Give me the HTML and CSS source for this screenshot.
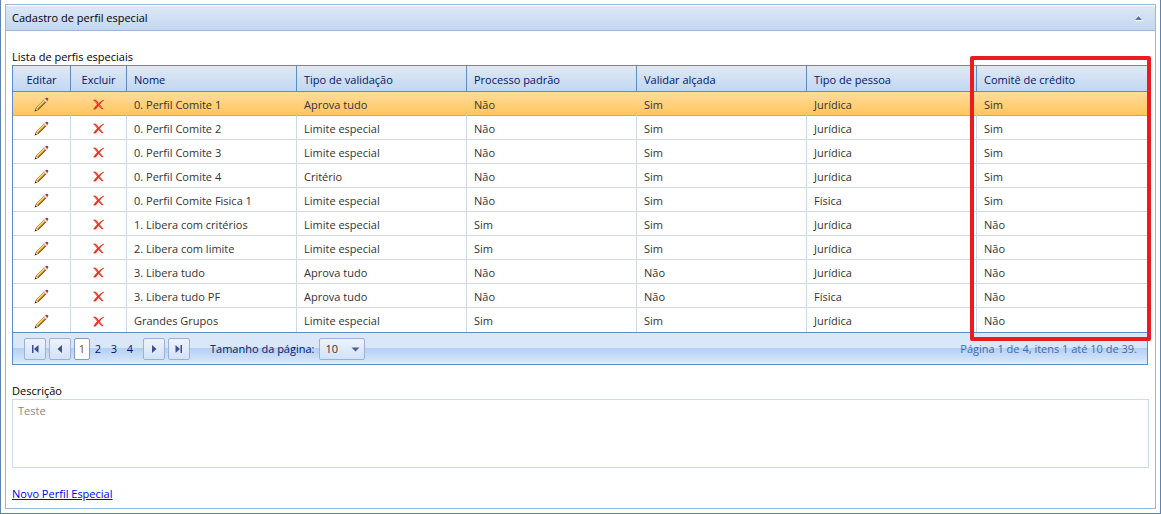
FILE: index.html
```html
<!DOCTYPE html>
<html lang="pt-BR">
<head>
<meta charset="utf-8">
<title>Cadastro de perfil especial</title>
<link rel="stylesheet" href="styles.css">
</head>
<body>
<svg class="sprite" aria-hidden="true">
  <symbol id="pencil" viewBox="0 0 16 16">
    <path d="M.8 15.2 2.200 11.300 10.800 2.700 13.300 5.200 4.700 13.800Z" fill="#7c4d18"/>
    <path d="M2.400 11.400 10.900 2.900 12.500 4.500 4 13Z" fill="#e3a21f"/>
    <path d="M2.700 11.500 11.200 3 11.900 3.700 3.400 12.200Z" fill="#ffe596"/>
    <path d="M.9 15.1 2.300 11.600 4.400 13.700Z" fill="#e8c990"/>
    <path d="M.6 15.4 1.500 13 3 14.500Z" fill="#222"/>
    <path d="M10.300 3.200 11.700 1.800 14.200 4.300 12.800 5.700Z" fill="#eceef4" stroke="#8c8c98" stroke-width=".4"/>
    <path d="M11.900 1.700Q13.300.3 14.900 1.400 15.900 2.800 14.300 4.200Z" fill="#c22c3a"/>
  </symbol>
  <symbol id="cross" viewBox="0 0 14 12">
    <path d="M1 1.2 3.4.6Q6.200 2.500 7.200 4.500 9.500 1.700 13 .5L13.300 1Q10.200 3.100 8.400 5.900L12.500 10.800 10.600 11.300 6.900 7.700Q5.300 9.700 3.900 11.400L1.200 11.100Q3.200 8 5.500 5.900 3.600 3.200 1 1.200Z" fill="#e6321e"/>
    <path d="M2.500 1.600 6.700 5.700M7.600 6.500 11 10.200" stroke="#ff8063" stroke-width=".7"/>
  </symbol>
</svg>
<main class="window">
  <section class="panel">
    <header class="panel-head">
      <h1 class="panel-title">Cadastro de perfil especial</h1>
      <button class="collapse" type="button" aria-label="Recolher"><svg width="9" height="6" viewBox="0 0 9 6"><path d="M0 6 4.500 0 9 6Z" fill="#fff"/><path d="M1 5 4.500 1 8 5Z" fill="#5d7494"/></svg></button>
    </header>
    <div class="panel-body">
      <h2 class="caption" id="list-title">Lista de perfis especiais</h2>
      <div class="grid">
        <table class="table" aria-labelledby="list-title">
          <colgroup><col class="col-edit"><col class="col-delete"><col><col><col><col><col><col></colgroup>
          <thead><tr><th class="action">Editar</th><th class="action">Excluir</th><th>Nome</th><th>Tipo de validação</th><th>Processo padrão</th><th>Validar alçada</th><th>Tipo de pessoa</th><th>Comitê de crédito</th></tr></thead>
          <tbody id="rows"></tbody>
        </table>
        <nav class="pager" aria-label="Paginação">
          <button class="page-btn" type="button" aria-label="Primeira página"><svg width="8" height="8" viewBox="0 0 8 8"><path d="M1 0H2.500V8H1ZM7.500 0V8L3 4Z" fill="#3d4f8f"/></svg></button>
          <button class="page-btn" type="button" aria-label="Página anterior"><svg width="8" height="8" viewBox="0 0 8 8"><path d="M6 0V8L1.500 4Z" fill="#3d4f8f"/></svg></button>
          <div class="pages"><a class="page current" href="#" aria-current="page">1</a><a class="page" href="#">2</a><a class="page" href="#">3</a><a class="page" href="#">4</a></div>
          <button class="page-btn" type="button" aria-label="Próxima página"><svg width="8" height="8" viewBox="0 0 8 8"><path d="M2 0V8L6.500 4Z" fill="#3d4f8f"/></svg></button>
          <button class="page-btn" type="button" aria-label="Última página"><svg width="8" height="8" viewBox="0 0 8 8"><path d="M.5 0V8L5 4ZM5.500 0H7V8H5.500Z" fill="#3d4f8f"/></svg></button>
          <label class="size-label" for="page-size">Tamanho da página:</label>
          <span class="size-box"><select class="size" id="page-size"><option>10</option><option>20</option><option>50</option></select><svg class="size-arrow" width="9" height="5" viewBox="0 0 9 5"><path d="M.5 .5H8.500L4.500 4.500Z" fill="#4b5f94"/></svg></span>
          <span class="summary">Página 1 de 4, itens 1 até 10 de 39.</span>
        </nav>
        <div class="highlight"></div>
      </div>
      <label class="caption description-label" for="description">Descrição</label>
      <textarea class="description" id="description" placeholder="Teste"></textarea>
      <a class="new-link" href="#">Novo Perfil Especial</a>
    </div>
  </section>
</main>
<script src="script.js"></script>
</body>
</html>
```
FILE: styles.css
```css
* { box-sizing: border-box; }
body {
  margin: 0;
  background: #fff;
  color: #000;
  font: 11px/16px "Open Sans", "Noto Sans", sans-serif;
}
button, select, textarea { font: inherit; }
svg { display: block; }
.sprite { position: absolute; width: 0; height: 0; }
.window {
  border: 1px solid #5d84b0;
  border-top: 0;
  padding: 4px;
}
.panel { border: 1px solid #9bb6d6; }
.panel-head {
  display: flex;
  align-items: center;
  justify-content: space-between;
  height: 26px;
  padding: 0 12px 0 6px;
  border-bottom: 1px solid #9bb6d6;
  background: linear-gradient(#dfe9f5, #c2d7f1);
  box-shadow: inset 0 1px #fff;
}
.panel-title { margin: 0; font-size: 11px; font-weight: 400; }
.collapse { padding: 0; border: 0; background: none; }
.panel-body { padding: 18px 6px 6px; }
.caption { display: block; margin: 0; font-size: 11px; font-weight: 400; line-height: 16px; }
.grid {
  position: relative;
  margin-right: 1px;
  border: 1px solid #5d8cc9;
}
.table {
  width: 100%;
  table-layout: fixed;
  border-collapse: separate;
  border-spacing: 0;
}
.col-edit { width: 58px; }
.col-delete { width: 56px; }
th, td { padding: 2px 7px 0; text-align: left; font-weight: 400; white-space: nowrap; }
th {
  height: 26px;
  border-right: 1px solid #5d8cc9;
  border-bottom: 1px solid #5d8cc9;
  background: linear-gradient(#dfe9f5, #c2d7f1);
  color: #00156e;
}
td {
  height: 24px;
  border-right: 1px solid #d0d7e5;
  border-bottom: 1px solid #d0d7e5;
  color: #333;
}
th:last-child, td:last-child { border-right: 0; }
.action { padding: 2px 0 0; text-align: center; }
.selected td {
  border-right-color: transparent;
  border-bottom-color: #ff9f32;
  background: linear-gradient(#ffdc9e, #ffc55a) border-box;
}
tbody tr:last-child td { border-bottom: 0; }
.icon-btn { display: block; margin: 0 auto; padding: 0; border: 0; background: none; }
.pager {
  display: flex;
  align-items: center;
  gap: 3px;
  height: 32px;
  padding: 1px 10px 0 11px;
  border-top: 1px solid #5d8cc9;
  background: linear-gradient(#d9e7f9 0 48%, #b3cff5 48%, #d6e5fa 92%, #eaf2fc);
  color: #00156e;
}
.page-btn {
  display: grid;
  place-items: center;
  width: 22px;
  height: 22px;
  padding: 0;
  border: 1px solid #9bb2d8;
  border-radius: 2px;
  background: linear-gradient(#edf3fc, #d3e2f8);
}
.pages { display: flex; align-items: center; width: 66px; }
.page { width: 16px; color: #00156e; line-height: 20px; text-align: center; text-decoration: none; }
.current { border: 1px solid #7f9dcb; border-radius: 2px; background: #fff; color: #7b4c25; }
.size-label { margin-left: 17px; }
.size-box { position: relative; width: 46px; margin-left: 2px; }
.size {
  display: block;
  width: 100%;
  height: 22px;
  padding: 0 5px;
  border: 1px solid #9bb2d8;
  border-radius: 2px;
  appearance: none;
  background: linear-gradient(#edf3fc, #d3e2f8);
  color: #333;
}
.size-arrow { position: absolute; top: 9px; right: 5px; pointer-events: none; }
.summary { margin-left: auto; color: #3e6aaa; }
.highlight {
  position: absolute;
  top: -10px;
  right: -4px;
  bottom: 23px;
  width: 181px;
  border: 4px solid #ea1c1f;
  border-radius: 2px;
  pointer-events: none;
}
.description-label { margin-top: 18px; }
.description {
  display: block;
  width: 100%;
  height: 69px;
  padding: 3px 5px;
  border: 1px solid #cddaea;
  resize: none;
}
.description::placeholder { color: #888; opacity: 1; }
.new-link { display: inline-block; margin-top: 18px; color: #00e; }
```
FILE: script.js
```js
const profiles = [
  ["0. Perfil Comite 1", "Aprova tudo", "Não", "Sim", "Jurídica", "Sim"],
  ["0. Perfil Comite 2", "Limite especial", "Não", "Sim", "Jurídica", "Sim"],
  ["0. Perfil Comite 3", "Limite especial", "Não", "Sim", "Jurídica", "Sim"],
  ["0. Perfil Comite 4", "Critério", "Não", "Sim", "Jurídica", "Sim"],
  ["0. Perfil Comite Fisica 1", "Limite especial", "Não", "Sim", "Física", "Sim"],
  ["1. Libera com critérios", "Limite especial", "Sim", "Sim", "Jurídica", "Não"],
  ["2. Libera com limite", "Limite especial", "Sim", "Sim", "Jurídica", "Não"],
  ["3. Libera tudo", "Aprova tudo", "Não", "Não", "Jurídica", "Não"],
  ["3. Libera tudo PF", "Aprova tudo", "Não", "Não", "Física", "Não"],
  ["Grandes Grupos", "Limite especial", "Sim", "Sim", "Jurídica", "Não"]
];

const action = (label, icon, width, height) =>
  `<td class="action"><button class="icon-btn" type="button" aria-label="${label}"><svg width="${width}" height="${height}"><use href="#${icon}"/></svg></button></td>`;

document.getElementById("rows").innerHTML = profiles.map((cells, i) =>
  `<tr${i === 0 ? ' class="selected"' : ""}>` +
  action("Editar", "pencil", 15, 15) +
  action("Excluir", "cross", 13, 11) +
  cells.map(text => `<td>${text}</td>`).join("") +
  "</tr>").join("");
```
